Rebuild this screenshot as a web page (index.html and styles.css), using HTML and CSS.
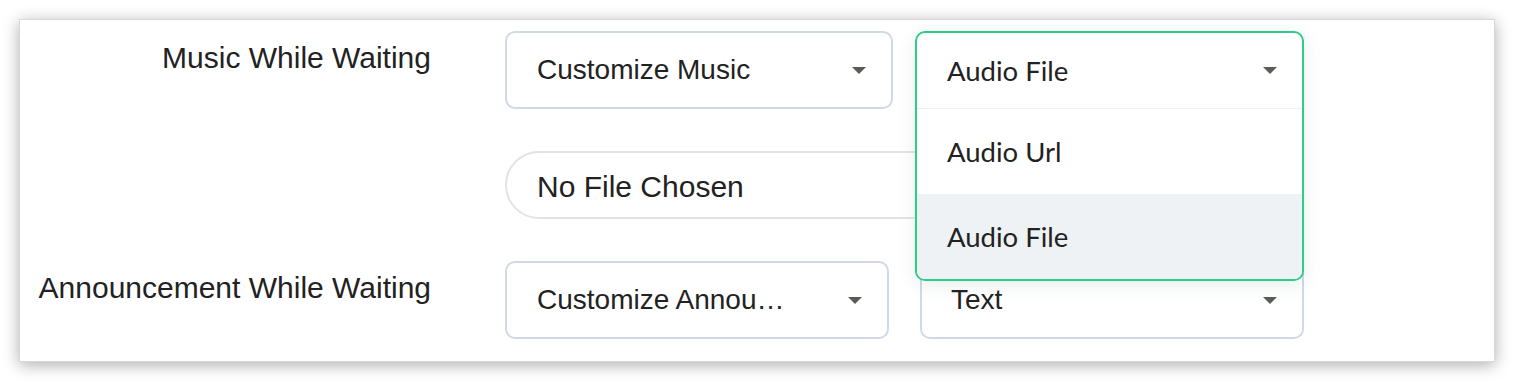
FILE: index.html
```html
<!DOCTYPE html>
<html lang="en">
<head>
    <meta charset="UTF-8">
    <meta name="viewport" content="width=device-width, initial-scale=1.0">
    <title>Waiting Settings</title>
    <link rel="stylesheet" href="styles.css">
</head>
<body>
    <div class="page">
        <div class="panel">
            <!-- Music row -->
            <div class="row">
                <div class="label">Music While Waiting</div>
                <div class="controls controls-music">
                    <div class="select select-music">
                        <span class="select-text">Customize Music</span>
                        <span class="caret"></span>
                    </div>
                    <div class="dropdown">
                        <div class="dropdown-box">
                            <div class="dropdown-head">
                                <span class="select-text">Audio File</span>
                                <span class="caret"></span>
                            </div>
                            <div class="option">Audio Url</div>
                            <div class="option option-active">Audio File</div>
                        </div>
                    </div>
                </div>
            </div>

            <!-- File picker row -->
            <div class="row">
                <div class="label"></div>
                <div class="controls">
                    <div class="file-input">No File Chosen</div>
                </div>
            </div>

            <!-- Announcement row -->
            <div class="row">
                <div class="label">Announcement While Waiting</div>
                <div class="controls controls-announce">
                    <div class="select select-announce">
                        <span class="select-text">Customize Annou&hellip;</span>
                        <span class="caret"></span>
                    </div>
                    <div class="select select-type">
                        <span class="select-text">Text</span>
                        <span class="caret"></span>
                    </div>
                </div>
            </div>
        </div>
    </div>
</body>
</html>
```

FILE: styles.css
```css
body {
    margin: 0;
    padding: 0;
    background-color: #fff;
    font-family: 'Liberation Sans', Arial, sans-serif;
    color: #222;
}

.page {
    padding: 19px;
}

.panel {
    box-sizing: border-box;
    width: 1476px;
    height: 343px;
    padding: 11px 0 22px 0;
    background-color: #fff;
    border: 1px solid #d8d8d8;
    box-shadow: 0 3px 15px rgba(0, 0, 0, 0.32);
    display: flex;
    flex-direction: column;
    gap: 42px;
}

.row {
    display: grid;
    grid-template-columns: 411px 799px;
    column-gap: 74px;
    align-items: start;
}

.label {
    margin-top: 9px;
    font-size: 30px;
    line-height: 36px;
    text-align: right;
    color: #222;
}

.controls {
    display: flex;
}

.controls-music {
    gap: 22px;
}

.controls-announce {
    gap: 31px;
}

/* Select boxes */
.select {
    box-sizing: border-box;
    height: 78px;
    padding: 0 25px 0 30px;
    border: 2px solid #d0dae5;
    border-radius: 10px;
    display: flex;
    align-items: center;
    background-color: #fff;
    font-size: 28px;
}

.select-text {
    flex: 1;
    min-width: 0;
    white-space: nowrap;
}

.select-music {
    width: 388px;
}

.select-announce {
    width: 384px;
}

.select-type {
    width: 384px;
    padding-left: 29px;
}

.caret {
    flex: none;
    width: 0;
    height: 0;
    border-left: 7px solid transparent;
    border-right: 7px solid transparent;
    border-top: 7px solid #5b5b58;
}

/* Open dropdown */
.dropdown {
    position: relative;
    width: 389px;
    height: 78px;
}

.dropdown-box {
    position: absolute;
    top: 0;
    left: 0;
    right: 0;
    z-index: 2;
    box-sizing: border-box;
    border: 2px solid #2ecc87;
    border-radius: 10px;
    background-color: #fff;
    overflow: hidden;
    box-shadow: 0 4px 18px rgba(46, 120, 90, 0.12);
    font-family: Lato, 'Liberation Sans', sans-serif;
    font-size: 27.5px;
    color: #222;
}

.dropdown-head {
    height: 75px;
    padding: 0 25px 0 30px;
    display: flex;
    align-items: center;
    border-bottom: 1px solid #edf1f4;
}

.option {
    height: 85px;
    padding-left: 30px;
    display: flex;
    align-items: center;
}

.option-active {
    background-color: #eef2f5;
}

/* File input */
.file-input {
    box-sizing: border-box;
    width: 799px;
    height: 68px;
    padding: 3px 0 0 30px;
    border: 2px solid #e3e3e3;
    border-radius: 34px;
    display: flex;
    align-items: center;
    font-size: 30px;
    color: #222;
}
```
